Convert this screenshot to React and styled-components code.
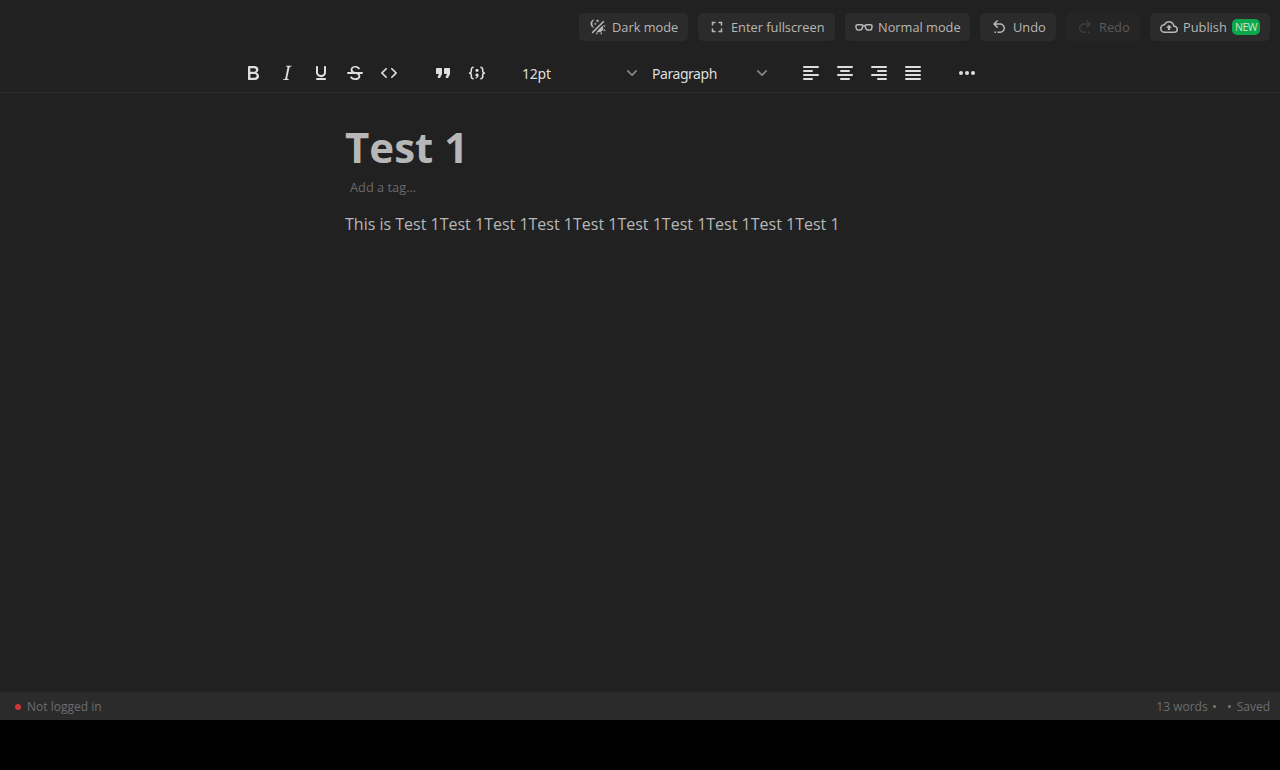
import React from "react";
import styled, { createGlobalStyle } from "styled-components";

const GlobalStyle = createGlobalStyle`
  * { box-sizing: border-box; }
  body {
    margin: 0;
    background: #000;
    font-family: "Open Sans", sans-serif;
  }
`;

const Window = styled.div`
  display: flex;
  flex-direction: column;
  width: 1280px;
  height: 720px;
  background: #212121;
  color: #b7b7b7;
`;

const ActionBar = styled.header`
  display: flex;
  justify-content: flex-end;
  gap: 10px;
  padding: 13px 10px 0;
  height: 54px;
`;

const ActionButton = styled.button`
  display: flex;
  align-items: center;
  gap: 5px;
  width: ${(p) => p.$width}px;
  height: 28px;
  padding: 0 0 0 10px;
  border: 0;
  border-radius: 5px;
  background: ${(p) => (p.disabled ? "#252525" : "#2b2b2b")};
  color: ${(p) => (p.disabled ? "#5a5a5a" : "#b7b7b7")};
  font: 12.8px/18px "Open Sans", sans-serif;
  white-space: nowrap;

  svg {
    color: ${(p) => (p.disabled ? "#3d3d3d" : "#b7b7b7")};
  }
`;

const NewBadge = styled.span`
  width: 28px;
  height: 16px;
  margin-left: auto;
  margin-right: 10px;
  border-radius: 5px;
  background: #0aa84a;
  color: #cfe3d6;
  font-size: 10.5px;
  letter-spacing: -0.5px;
  line-height: 16px;
  text-align: center;
`;

const Icon = styled.svg`
  display: block;
  flex: none;
  width: ${(p) => p.$size}px;
  height: ${(p) => p.$size}px;
  fill: currentColor;
`;

const FormatBar = styled.div`
  display: flex;
  align-items: center;
  height: 39px;
  padding-left: 236px;
  border-bottom: 1px solid #2b2b2b;
`;

const ToolGroup = styled.div`
  display: flex;
  margin-right: ${(p) => p.$after || 0}px;
`;

const ToolButton = styled.button`
  display: grid;
  place-items: center;
  width: 34px;
  height: 34px;
  padding: 0;
  border: 0;
  background: none;
  color: #dedede;
`;

const Select = styled.button`
  display: flex;
  align-items: center;
  justify-content: space-between;
  width: 130px;
  height: 34px;
  padding: 2px 7px 0 8px;
  border: 0;
  background: none;
  color: #dedede;
  font: 14px/20px "Noto Sans", sans-serif;
  letter-spacing: ${(p) => p.$tracking}px;

  svg {
    color: #8a8a8a;
    margin-top: -2px;
  }
`;

const Editor = styled.main`
  flex: 1;
  padding: 25px 0 0 345px;
`;

const Title = styled.h1`
  margin: 0;
  font-size: 42px;
  line-height: 58px;
  font-weight: 700;
`;

const TagInput = styled.div`
  padding: 2px 5px 0;
  color: #6a6a6a;
  font-size: 12.8px;
  line-height: 18px;
`;

const Paragraph = styled.p`
  margin: 16px 0 0;
  font-size: 16px;
  line-height: 24px;
`;

const StatusBar = styled.footer`
  display: flex;
  align-items: center;
  justify-content: space-between;
  height: 28px;
  padding: 1px 10px 0 15px;
  background: #2b2b2b;
  color: #6d6d6d;
  font-size: 12px;
  line-height: 27px;
`;

const StatusGroup = styled.div`
  display: flex;
  align-items: center;
  gap: 5px;
`;

const StatusDot = styled.span`
  width: 6px;
  height: 6px;
  margin-right: 1px;
  border-radius: 50%;
  background: #d03434;
`;

const Separator = styled.span`
  width: 3px;
  height: 3px;
  border-radius: 50%;
  background: #777;
  margin-right: ${(p) => p.$after}px;
`;

const paths = {
  theme:
    "M7.5,2C5.71,3.15 4.5,5.18 4.5,7.5C4.5,9.82 5.71,11.85 7.53,13C4.46,13 2,10.54 2,7.5A5.5,5.5 0 0,1 7.5,2M19.07,3.5L20.5,4.93L4.93,20.5L3.5,19.07L19.07,3.5M12.89,5.93L11.41,5L9.97,6L10.39,4.3L9,3.24L10.75,3.12L11.33,1.47L12,3.1L13.73,3.13L12.38,4.26L12.89,5.93M9.59,9.54L8.43,8.81L7.31,9.59L7.65,8.27L6.56,7.44L7.92,7.35L8.37,6.06L8.88,7.33L10.24,7.36L9.19,8.23L9.59,9.54M19,13.5A5.5,5.5 0 0,1 13.5,19C12.28,19 11.15,18.6 10.24,17.93L17.93,10.24C18.6,11.15 19,12.28 19,13.5M14.6,20.08L17.37,18.93L17.13,22.28L14.6,20.08M18.93,17.38L20.08,14.61L22.28,17.15L18.93,17.38M20.08,12.42L18.94,9.64L22.28,9.88L20.08,12.42M9.63,18.93L12.4,20.08L9.87,22.27L9.63,18.93Z",
  fullscreen:
    "M5,5H10V7H7V10H5V5M14,5H19V10H17V7H14V5M17,14H19V19H14V17H17V14M10,17V19H5V14H7V17H10Z",
  glasses:
    "M3,10C2.76,10 2.55,10.09 2.41,10.25C2.27,10.4 2.21,10.62 2.24,10.86L2.74,13.85C2.82,14.5 3.4,15 4,15H7C7.64,15 8.36,14.44 8.5,13.82L9.56,10.63C9.6,10.5 9.57,10.31 9.5,10.19C9.39,10.07 9.22,10 9,10H3M7,17H4C2.38,17 0.96,15.74 0.76,14.14L0.26,11.15C0.15,10.3 0.39,9.5 0.91,8.92C1.43,8.34 2.19,8 3,8H9C9.83,8 10.58,8.35 11.06,8.96C11.17,9.11 11.27,9.27 11.35,9.45C11.78,9.36 12.22,9.36 12.64,9.45C12.72,9.27 12.82,9.11 12.94,8.96C13.41,8.35 14.16,8 15,8H21C21.81,8 22.57,8.34 23.09,8.92C23.6,9.5 23.84,10.3 23.74,11.11L23.23,14.18C23.04,15.74 21.61,17 20,17H17C15.44,17 13.92,15.81 13.54,14.3L12.64,11.59C12.26,11.31 11.73,11.31 11.35,11.59L10.43,14.37C10.07,15.82 8.56,17 7,17M15,10C14.78,10 14.6,10.07 14.5,10.18C14.42,10.31 14.4,10.5 14.45,10.7L15.46,13.75C15.64,14.44 16.36,15 17,15H20C20.59,15 21.18,14.5 21.25,13.89L21.76,10.82C21.79,10.62 21.73,10.4 21.59,10.25C21.45,10.09 21.24,10 21,10H15Z",
  undo:
    "M13.5,7A6.5,6.5 0 0,1 20,13.5A6.5,6.5 0 0,1 13.5,20H10V18H13.5C16,18 18,16 18,13.5C18,11 16,9 13.5,9H7.83L10.91,12.09L9.5,13.5L4,8L9.5,2.5L10.92,3.91L7.83,7H13.5M6,18H8V20H6V18Z",
  redo:
    "M10.5,7A6.5,6.5 0 0,0 4,13.5A6.5,6.5 0 0,0 10.5,20H14V18H10.5C8,18 6,16 6,13.5C6,11 8,9 10.5,9H16.17L13.09,12.09L14.5,13.5L20,8L14.5,2.5L13.08,3.91L16.17,7H10.5M18,18H16V20H18V18Z",
  publish:
    "M19.35 10.04C18.67 6.59 15.64 4 12 4 9.11 4 6.6 5.64 5.35 8.04 2.34 8.36 0 10.91 0 14a6 6 0 006 6h13a5 5 0 005-5c0-2.64-2.05-4.78-4.65-4.96M19 18H6a4 4 0 01-4-4c0-2.05 1.53-3.76 3.56-3.97l1.07-.11.5-.95A5.469 5.469 0 0112 6c2.62 0 4.88 1.86 5.39 4.43l.3 1.5 1.53.11A2.98 2.98 0 0122 15a3 3 0 01-3 3M8 13h2.55v3h2.9v-3H16l-4-4-4 4z",
  bold:
    "M7.8 19c-.3 0-.5 0-.6-.2l-.2-.5V5.7c0-.2 0-.4.2-.5l.6-.2h5c1.5 0 2.7.3 3.5 1 .7.6 1.1 1.4 1.1 2.5a3 3 0 01-.6 1.9c-.4.6-1 1-1.6 1.2.4.1.9.3 1.3.6s.8.7 1 1.2c.4.4.5 1 .5 1.6 0 1.3-.4 2.3-1.3 3-.8.7-2.1 1-3.8 1H7.8zm5-8.3c.6 0 1.2-.1 1.6-.5.4-.3.6-.7.6-1.3 0-1.1-.8-1.7-2.3-1.7H9.3v3.5h3.4zm.5 6c.7 0 1.3-.1 1.7-.4.4-.4.6-.9.6-1.5s-.2-1-.7-1.4c-.4-.3-1-.4-2-.4H9.4v3.8h4z",
  italic:
    "M16.7 4.7l-.1.9h-.3c-.6 0-1 0-1.4.3-.3.3-.4.6-.5 1.1l-2.1 9.8v.6c0 .5.4.8 1.4.8h.2l-.2.8H8l.2-.8h.2c1.1 0 1.8-.5 2-1.5l2-9.8.1-.5c0-.6-.4-.8-1.4-.8h-.3l.2-.9h5.8z",
  underline:
    "M16 5c.6 0 1 .4 1 1v5.5a4 4 0 01-.4 1.8l-1 1.4a5.3 5.3 0 01-5.5 1 5 5 0 01-1.6-1c-.5-.4-.8-.9-1.1-1.4a4 4 0 01-.4-1.8V6c0-.6.4-1 1-1s1 .4 1 1v5.5c0 .3 0 .6.2 1l.6.7a3.3 3.3 0 002.2.8 3.4 3.4 0 002.2-.8c.3-.2.4-.5.6-.8l.2-.9V6c0-.6.4-1 1-1zM8 17h8c.6 0 1 .4 1 1s-.4 1-1 1H8a1 1 0 010-2z",
  strike:
    "M15.6 8.5c-.5-.7-1-1.1-1.3-1.3-.6-.4-1.3-.6-2-.6-2.7 0-2.8 1.7-2.8 2.1 0 1.6 1.8 2 3.2 2.3 4.4.9 4.6 2.8 4.6 3.9 0 1.4-.7 4.1-5 4.1A6.2 6.2 0 017 16.4l1.5-1.1c.4.6 1.6 2 3.7 2 1.6 0 2.5-.4 3-1.2.4-.8.3-2-.8-2.6-.7-.4-1.6-.7-2.9-1-1-.2-3.9-.8-3.9-3.6C7.6 6 10.3 5 12.4 5c2.9 0 4.2 1.6 4.7 2.4l-1.5 1.1z M5 11h14a1 1 0 010 2H5a1 1 0 010-2z",
  code:
    "M9.8 15.7c.3.3.3.8 0 1-.3.4-.9.4-1.2 0l-4.4-4.1a.8.8 0 010-1.2l4.4-4.2c.3-.3.9-.3 1.2 0 .3.3.3.8 0 1.1L6 12l3.8 3.7zM14.2 15.7c-.3.3-.3.8 0 1 .4.4.9.4 1.2 0l4.4-4.1c.3-.3.3-.9 0-1.2l-4.4-4.2a.8.8 0 00-1.2 0c-.3.3-.3.8 0 1.1L18 12l-3.8 3.7z",
  quote:
    "M7.5 17h.9c.4 0 .7-.2.9-.6L11 13V8c0-.6-.4-1-1-1H6a1 1 0 00-1 1v4c0 .6.4 1 1 1h2l-1.3 2.7a1 1 0 00.8 1.3zm8 0h.9c.4 0 .7-.2.9-.6L19 13V8c0-.6-.4-1-1-1h-4a1 1 0 00-1 1v4c0 .6.4 1 1 1h2l-1.3 2.7a1 1 0 00.8 1.3z",
  codeSample:
    "M7.1 10.1a2.8 2.8 0 01-.8 2 2.8 2.8 0 01.8 2v1.7c0 .3.1.6.4.8.2.3.5.4.8.4.3 0 .4.2.4.4v.8c0 .2-.1.4-.4.4-.7 0-1.4-.3-2-.8-.5-.6-.8-1.3-.8-2v-1.7c0-.3-.1-.6-.4-.8-.2-.3-.5-.4-.8-.4a.4.4 0 01-.4-.4v-.8c0-.2.2-.4.4-.4.3 0 .6-.1.8-.4.3-.2.4-.5.4-.8V8.4c0-.7.3-1.4.8-2 .6-.5 1.3-.8 2-.8.3 0 .4.2.4.4v.8c0 .2-.1.4-.4.4-.3 0-.6.1-.8.4-.3.2-.4.5-.4.8v1.7zm9.8 0V8.4c0-.3-.1-.6-.4-.8-.2-.3-.5-.4-.8-.4a.4.4 0 01-.4-.4V6c0-.2.1-.4.4-.4.7 0 1.4.3 2 .8.5.6.8 1.3.8 2v1.7c0 .3.1.6.4.8.2.3.5.4.8.4.2 0 .4.2.4.4v.8c0 .2-.2.4-.4.4-.3 0-.6.1-.8.4-.3.2-.4.5-.4.8v1.7c0 .7-.3 1.4-.8 2-.6.5-1.3.8-2 .8a.4.4 0 01-.4-.4v-.8c0-.2.1-.4.4-.4.3 0 .6-.1.8-.4.3-.2.4-.5.4-.8v-1.7a2.8 2.8 0 01.8-2 2.8 2.8 0 01-.8-2zm-3.3-.6c0 .4-.1.8-.5 1.1-.3.3-.7.5-1.1.5-.4 0-.8-.2-1.1-.5-.4-.3-.5-.7-.5-1.1 0-.5.1-.9.5-1.2.3-.3.7-.4 1.1-.4.4 0 .8.1 1.1.4.4.3.5.7.5 1.2zM12 12.4c.4 0 .8.1 1.1.5.4.3.5.7.5 1.1 0 1-.1 1.6-.5 2a3 3 0 01-1.1 1c-.4.3-.8.4-1.1.4a.5.5 0 01-.5-.5v-.5a3 3 0 001-.2l.6-.6c-.6 0-1-.2-1.3-.5-.2-.3-.3-.7-.3-1 0-.5.1-1 .5-1.2.3-.4.7-.5 1.1-.5z",
  alignLeft:
    "M5 5h14a1 1 0 010 2H5a1 1 0 110-2zm0 4h8a1 1 0 010 2H5a1 1 0 110-2zm0 8h8a1 1 0 010 2H5a1 1 0 010-2zm0-4h14a1 1 0 010 2H5a1 1 0 010-2z",
  alignCenter:
    "M5 5h14a1 1 0 010 2H5a1 1 0 110-2zm3 4h8a1 1 0 010 2H8a1 1 0 110-2zm0 8h8a1 1 0 010 2H8a1 1 0 010-2zm-3-4h14a1 1 0 010 2H5a1 1 0 010-2z",
  alignRight:
    "M5 5h14a1 1 0 010 2H5a1 1 0 110-2zm6 4h8a1 1 0 010 2h-8a1 1 0 110-2zm0 8h8a1 1 0 010 2h-8a1 1 0 010-2zm-6-4h14a1 1 0 010 2H5a1 1 0 010-2z",
  justify:
    "M5 5h14a1 1 0 010 2H5a1 1 0 110-2zm0 4h14a1 1 0 010 2H5a1 1 0 110-2zm0 4h14a1 1 0 010 2H5a1 1 0 010-2zm0 4h14a1 1 0 010 2H5a1 1 0 010-2z",
  more:
    "M6 10a2 2 0 100 4 2 2 0 000-4zm6 0a2 2 0 100 4 2 2 0 000-4zm6 0a2 2 0 100 4 2 2 0 000-4z",
  chevron:
    "M8.7 2.2c.3-.3.8-.3 1 0 .4.4.4.9 0 1.2L5.7 7.8c-.3.3-.9.3-1.2 0L.2 3.4a.8.8 0 010-1.2c.3-.3.8-.3 1.1 0L5 6l3.7-3.8z",
};

const Glyph = ({ name, size = 24, box = 24 }) => (
  <Icon
    $size={size}
    viewBox={`0 0 ${box} ${box}`}
    fillRule={name === "strike" ? "nonzero" : "evenodd"}
    aria-hidden="true"
  >
    <path d={paths[name]} />
  </Icon>
);

const actions = [
  { icon: "theme", label: "Dark mode", width: 109 },
  { icon: "fullscreen", label: "Enter fullscreen", width: 137 },
  { icon: "glasses", label: "Normal mode", width: 125 },
  { icon: "undo", label: "Undo", width: 76 },
  { icon: "redo", label: "Redo", width: 74, disabled: true },
  { icon: "publish", label: "Publish", width: 120, isNew: true },
];

const Tools = ({ names, after }) => (
  <ToolGroup $after={after}>
    {names.map((name) => (
      <ToolButton key={name} aria-label={name}>
        <Glyph name={name} />
      </ToolButton>
    ))}
  </ToolGroup>
);

export default function App() {
  return (
    <>
      <GlobalStyle />
      <Window>
        <ActionBar>
          {actions.map((a) => (
            <ActionButton key={a.label} $width={a.width} disabled={a.disabled}>
              <Glyph name={a.icon} size={18} />
              <span>{a.label}</span>
              {a.isNew && <NewBadge>NEW</NewBadge>}
            </ActionButton>
          ))}
        </ActionBar>
        <FormatBar>
          <Tools names={["bold", "italic", "underline", "strike", "code"]} after={20} />
          <Tools names={["quote", "codeSample"]} after={20} />
          <ToolGroup $after={20}>
            <Select $tracking={-0.2}>
              <span>12pt</span>
              <Glyph name="chevron" size={10} box={10} />
            </Select>
            <Select $tracking={-0.45}>
              <span>Paragraph</span>
              <Glyph name="chevron" size={10} box={10} />
            </Select>
          </ToolGroup>
          <Tools names={["alignLeft", "alignCenter", "alignRight", "justify"]} after={20} />
          <Tools names={["more"]} />
        </FormatBar>
        <Editor>
          <Title>Test 1</Title>
          <TagInput>Add a tag...</TagInput>
          <Paragraph>
            This is Test 1Test 1Test 1Test 1Test 1Test 1Test 1Test 1Test 1Test 1
          </Paragraph>
        </Editor>
        <StatusBar>
          <StatusGroup>
            <StatusDot />
            <span>Not logged in</span>
          </StatusGroup>
          <StatusGroup>
            <span>13 words</span>
            <Separator $after={7} />
            <Separator $after={1} />
            <span>Saved</span>
          </StatusGroup>
        </StatusBar>
      </Window>
    </>
  );
}
